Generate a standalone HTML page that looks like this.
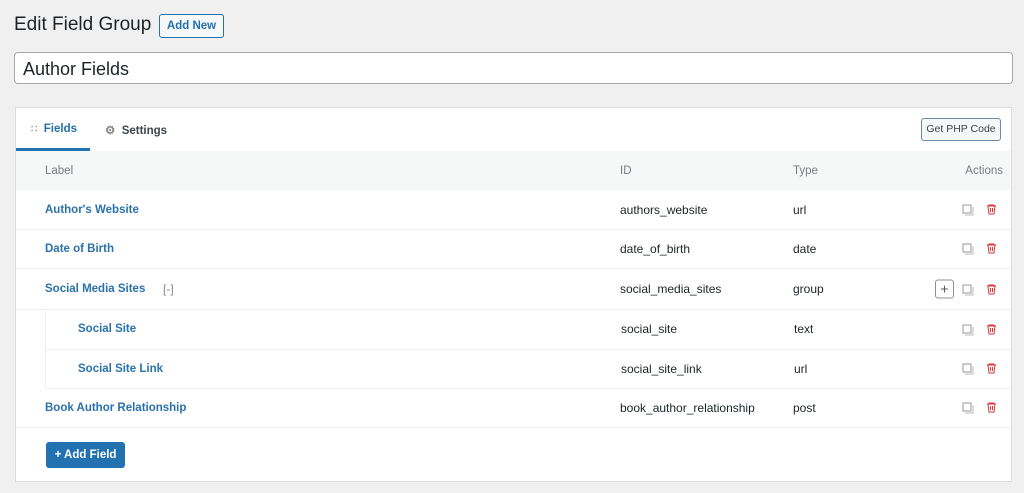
<!DOCTYPE html>
<html><head><style>
body{margin:0;width:1024px;height:493px;background:#f0f0f1;font-family:"Liberation Sans",sans-serif;color:#1d2327;position:relative;overflow:hidden}
.a{position:absolute}
h1{position:absolute;left:14px;top:14px;margin:0;font-size:19px;font-weight:400;color:#1d2327}
.btn2{position:absolute;border:1px solid #2271b1;border-radius:3px;color:#2271b1;background:#f6f7f7;font-size:11.5px;font-weight:bold;text-align:center;box-sizing:border-box}
.inp{left:14px;top:52px;width:999px;height:32px;background:#fff;border:1px solid #a7aaad;border-radius:4px;box-sizing:border-box;font-size:18px;padding:6px 8px}
.panel{left:15px;top:107px;width:997px;height:375px;background:#fff;border:1px solid #dcdcde;box-sizing:border-box}
.row{position:absolute;left:0;right:0;border-bottom:1px solid #f0f0f1;font-size:12px}
.row span{position:absolute;top:50%;transform:translateY(-50%)}
.lbl{color:#2a72ac;font-weight:bold;font-size:11.5px}
.ic{position:absolute;top:50%;transform:translateY(-50%)}
</style></head><body>
<h1>Edit Field Group</h1>
<div class="btn2" style="left:159px;top:14px;width:65px;height:24px;line-height:22px">Add New</div>
<div class="a inp">Author Fields</div>
<div class="a panel">
 <div class="a" style="left:0;right:0;top:0;height:43px;border-bottom:1px solid #dcdcde"></div>
 <div class="a" style="left:15px;top:15px;font-size:11.5px;font-weight:bold;color:#2271b1"><span style="color:#999;font-size:10px">&#8759;</span>&nbsp; Fields</div>
 <div class="a" style="left:0;top:40px;width:74px;height:3px;background:#2271b1"></div>
 <div class="a" style="left:89px;top:15px;font-size:11.5px;font-weight:bold;color:#3c434a"><span style="color:#888">&#9881;</span>&nbsp; Settings</div>
 <div class="btn2" style="left:905px;top:10px;width:80px;height:23px;line-height:21px;font-weight:400;font-size:10.5px;border-color:#6b8aa3;color:#3c434a">Get PHP Code</div>
 <div class="row" style="top:43px;height:39px;background:#f6f7f7;color:#787c82;font-size:11.5px;border:0">
  <span style="left:29px">Label</span><span style="left:604px">ID</span><span style="left:777px">Type</span><span style="right:8px">Actions</span></div>
 <div class="row" style="top:82px;height:39px"><span class="lbl" style="left:29px">Author's Website</span><span style="left:604px">authors_website</span><span style="left:777px">url</span></div>
 <div class="row" style="top:121px;height:39px"><span class="lbl" style="left:29px">Date of Birth</span><span style="left:604px">date_of_birth</span><span style="left:777px">date</span></div>
 <div class="row" style="top:160px;height:41px"><span class="lbl" style="left:29px">Social Media Sites</span><span style="left:147px;color:#888">[-]</span><span style="left:604px">social_media_sites</span><span style="left:777px">group</span>
  <div class="ic" style="left:919px;width:17px;height:17px;border:1px solid #8c8f94;border-radius:3px;text-align:center;line-height:16px;color:#555;font-size:14px">+</div></div>
 <div class="row" style="top:201px;height:40px;left:29px;border-left:1px solid #f0f0f1"><span class="lbl" style="left:32px">Social Site</span><span style="left:575px">social_site</span><span style="left:748px">text</span></div>
 <div class="row" style="top:241px;height:39px;left:29px;border-left:1px solid #f0f0f1"><span class="lbl" style="left:32px">Social Site Link</span><span style="left:575px">social_site_link</span><span style="left:748px">url</span></div>
 <div class="row" style="top:280px;height:39px"><span class="lbl" style="left:29px">Book Author Relationship</span><span style="left:604px">book_author_relationship</span><span style="left:777px">post</span></div>
 <div class="a" style="left:30px;top:334px;width:79px;height:26px;background:#2271b1;border-radius:3px;color:#fff;font-size:11.5px;font-weight:bold;text-align:center;line-height:26px">+ Add Field</div>
</div>
<svg class="a" style="left:0;top:0" width="1024" height="493">
<defs><g id="ac"><rect x="0" y="0" width="8" height="8" fill="none" stroke="#999"/><path d="M10 2v8h-8" fill="none" stroke="#bbb"/><path d="M24 1h9M26 1v-1h5v1M25 1l1 8h5l1-8M27.5 3v4M29.5 3v4" fill="none" stroke="#d63638"/></g></defs>
<use href="#ac" x="963" y="205"/>
<use href="#ac" x="963" y="244"/>
<use href="#ac" x="963" y="285"/>
<use href="#ac" x="963" y="325"/>
<use href="#ac" x="963" y="364"/>
<use href="#ac" x="963" y="403"/>
</svg>
</body></html>
